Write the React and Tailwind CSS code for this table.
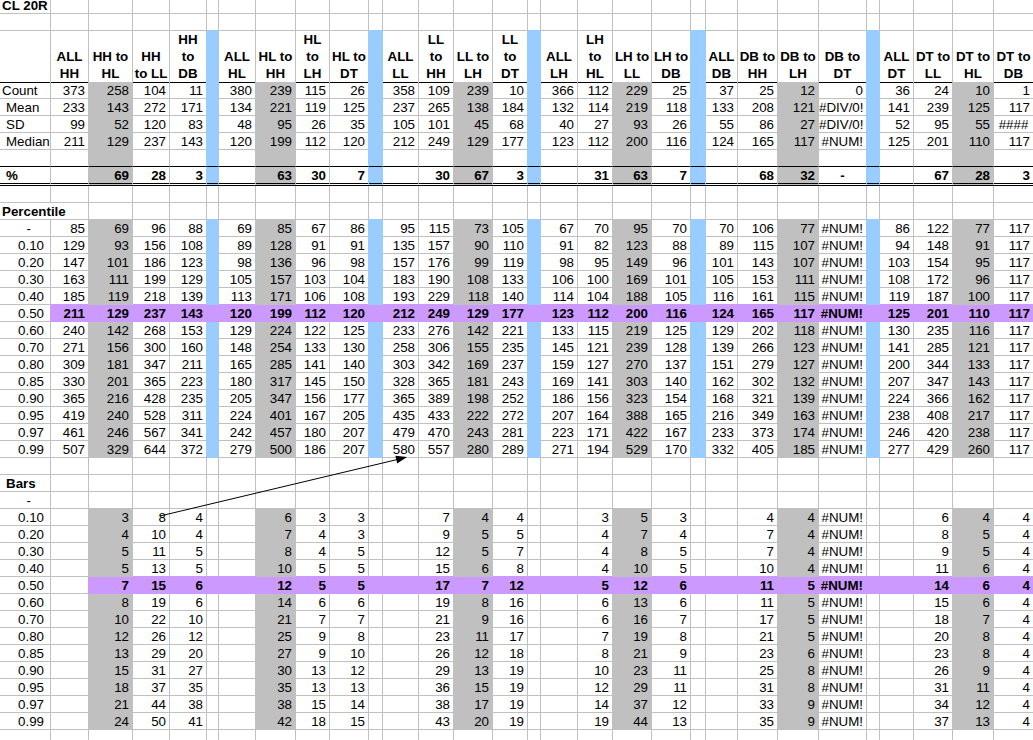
import React from "react";

// column template, widths read off the gridlines
const COLS =
  "grid grid-cols-[51px_38px_44px_37px_37px_12px_37px_40px_34px_39px_14px_36px_35px_39px_35px_13px_37px_35px_39px_39px_15px_32px_40px_41px_48px_13px_34px_39px_41px_40px]";

const NCOL = 30;
const BLUE = [5, 10, 15, 20, 25];
const GRAY = [2, 7, 13, 18, 23, 28];
const DC = [1, 2, 3, 4, 6, 7, 8, 9, 11, 12, 13, 14, 16, 17, 18, 19, 21, 22, 23, 24, 26, 27, 28, 29];

const HEAD = [
  ["ALL", "HH"], ["HH to", "HL"], ["HH", "to LL"], ["HH", "to", "DB"],
  ["ALL", "HL"], ["HL to", "HH"], ["HL", "to", "LH"], ["HL to", "DT"],
  ["ALL", "LL"], ["LL", "to", "HH"], ["LL to", "LH"], ["LL", "to", "DT"],
  ["ALL", "LH"], ["LH", "to", "HL"], ["LH to", "LL"], ["LH to", "DB"],
  ["ALL", "DB"], ["DB to", "HH"], ["DB to", "LH"], ["DB to", "DT"],
  ["ALL", "DT"], ["DT to", "LL"], ["DT to", "HL"], ["DT to", "DB"],
];

const STATS = [
  ["Count", "pl-[2px]", "373 258 104 11 380 239 115 26 358 109 239 10 366 112 229 25 37 25 12 0 36 24 10 1"],
  ["Mean", "pl-[6px]", "233 143 272 171 134 221 119 125 237 265 138 184 132 114 219 118 133 208 121 #DIV/0! 141 239 125 117"],
  ["SD", "pl-[6px]", "99 52 120 83 48 95 26 35 105 101 45 68 40 27 93 26 55 86 27 #DIV/0! 52 95 55 ####"],
  ["Median", "pl-[6px]", "211 129 237 143 120 199 112 120 212 249 129 177 123 112 200 116 124 165 117 #NUM! 125 201 110 117"],
];

const PCTL = [
  ["-", "85 69 96 88 69 85 67 86 95 115 73 105 67 70 95 70 70 106 77 #NUM! 86 122 77 117"],
  ["0.10", "129 93 156 108 89 128 91 91 135 157 90 110 91 82 123 88 89 115 107 #NUM! 94 148 91 117"],
  ["0.20", "147 101 186 123 98 136 96 98 157 176 99 119 98 95 149 96 101 143 107 #NUM! 103 154 95 117"],
  ["0.30", "163 111 199 129 105 157 103 104 183 190 108 133 106 100 169 101 105 153 111 #NUM! 108 172 96 117"],
  ["0.40", "185 119 218 139 113 171 106 108 193 229 118 140 114 104 188 105 116 161 115 #NUM! 119 187 100 117"],
  ["0.50", "211 129 237 143 120 199 112 120 212 249 129 177 123 112 200 116 124 165 117 #NUM! 125 201 110 117"],
  ["0.60", "240 142 268 153 129 224 122 125 233 276 142 221 133 115 219 125 129 202 118 #NUM! 130 235 116 117"],
  ["0.70", "271 156 300 160 148 254 133 130 258 306 155 235 145 121 239 128 139 266 123 #NUM! 141 285 121 117"],
  ["0.80", "309 181 347 211 165 285 141 140 303 342 169 237 159 127 270 137 151 279 127 #NUM! 200 344 133 117"],
  ["0.85", "330 201 365 223 180 317 145 150 328 365 181 243 169 141 303 140 162 302 132 #NUM! 207 347 143 117"],
  ["0.90", "365 216 428 235 205 347 156 177 365 389 198 252 186 156 323 154 168 321 139 #NUM! 224 366 162 117"],
  ["0.95", "419 240 528 311 224 401 167 205 435 433 222 272 207 164 388 165 216 349 163 #NUM! 238 408 217 117"],
  ["0.97", "461 246 567 341 242 457 180 207 479 470 243 281 223 171 422 167 233 373 174 #NUM! 246 420 238 117"],
  ["0.99", "507 329 644 372 279 500 186 207 580 557 280 289 271 194 529 170 332 405 185 #NUM! 277 429 260 117"],
];

const BARS = [
  ["0.10", ". 3 8 4 . 6 3 3 . 7 4 4 . 3 5 3 . 4 4 #NUM! . 6 4 4"],
  ["0.20", ". 4 10 4 . 7 4 3 . 9 5 5 . 4 7 4 . 7 4 #NUM! . 8 5 4"],
  ["0.30", ". 5 11 5 . 8 4 5 . 12 5 7 . 4 8 5 . 7 4 #NUM! . 9 5 4"],
  ["0.40", ". 5 13 5 . 10 5 5 . 15 6 8 . 4 10 5 . 10 4 #NUM! . 11 6 4"],
  ["0.50", ". 7 15 6 . 12 5 5 . 17 7 12 . 5 12 6 . 11 5 #NUM! . 14 6 4"],
  ["0.60", ". 8 19 6 . 14 6 6 . 19 8 16 . 6 13 6 . 11 5 #NUM! . 15 6 4"],
  ["0.70", ". 10 22 10 . 21 7 7 . 21 9 16 . 6 16 7 . 17 5 #NUM! . 18 7 4"],
  ["0.80", ". 12 26 12 . 25 9 8 . 23 11 17 . 7 19 8 . 21 5 #NUM! . 20 8 4"],
  ["0.85", ". 13 29 20 . 27 9 10 . 26 12 18 . 8 21 9 . 23 6 #NUM! . 23 8 4"],
  ["0.90", ". 15 31 27 . 30 13 12 . 29 13 19 . 10 23 11 . 25 8 #NUM! . 26 9 4"],
  ["0.95", ". 18 37 35 . 35 13 13 . 36 15 19 . 12 29 11 . 31 8 #NUM! . 31 11 4"],
  ["0.97", ". 21 44 38 . 38 15 14 . 38 17 19 . 14 37 12 . 33 9 #NUM! . 34 12 4"],
  ["0.99", ". 24 50 41 . 42 18 15 . 43 20 19 . 19 44 13 . 35 9 #NUM! . 37 13 4"],
];

const split = (s) => s.split(" ").map((v) => (v === "." ? "" : v));

const rows = [
  { h: "h-[14px]", kind: "title" },
  { h: "h-[17px]" },
  { h: "h-[51px]", kind: "head", fill: "head", bottom: "black" },
  ...STATS.map(([label, lcls, v]) => ({ h: "h-[17px]", label, lcls, vals: split(v), fill: "top" })),
  { h: "h-[17px]", fill: "top", bottom: "black" },
  { h: "h-[19px]", label: "%", lcls: "pl-[6px] font-bold", bold: true, fill: "top", bottom: "double",
    vals: split(". 69 28 3 . 63 30 7 . 30 67 3 . 31 63 7 . 68 32 - . 67 28 3") },
  { h: "h-[17px]" },
  { h: "h-[17px]", label: "Percentile", lcls: "pl-[2px] font-bold", span: true },
  ...PCTL.map(([label, v]) => ({
    h: "h-[17px]", label, lcls: label === "-" ? "text-right pr-[19px]" : "text-right pr-[6px]",
    vals: split(v), fill: label === "0.50" ? "pctMid" : "top", bold: label === "0.50",
  })),
  { h: "h-[17px]" },
  { h: "h-[17px]", label: "Bars", lcls: "pl-[6px] font-bold" },
  { h: "h-[17px]", label: "-", lcls: "text-right pr-[19px]" },
  ...BARS.map(([label, v]) => ({
    h: "h-[17px]", label, lcls: "text-right pr-[6px]",
    vals: split(v), fill: label === "0.50" ? "barsMid" : "bars", bold: label === "0.50",
  })),
  { h: "h-[17px]" },
];

function fillOf(row, c) {
  if (!row || c >= NCOL) return null;
  switch (row.fill) {
    case "head":
      return BLUE.includes(c) ? "blue" : null;
    case "top":
      if (BLUE.includes(c)) return "blue";
      return GRAY.includes(c) ? "gray" : null;
    case "pctMid":
      return c >= 1 ? "purple" : null;
    case "bars":
      return GRAY.includes(c) ? "gray" : null;
    case "barsMid":
      return c >= 2 ? "purple" : null;
    default:
      return null;
  }
}

const BG = { gray: "bg-[#c0c0c0]", blue: "bg-[#99ccff]", purple: "bg-[#cc99ff]" };
const BR = { grid: "border-r-[#c0c0c0]", gray: "border-r-[#c0c0c0]", blue: "border-r-[#99ccff]", purple: "border-r-[#cc99ff]" };
const BB = { grid: "border-b-[#c0c0c0]", gray: "border-b-[#c0c0c0]", blue: "border-b-[#99ccff]", purple: "border-b-[#cc99ff]" };

function Row({ row, next }) {
  const cells = [];
  for (let c = 0; c < NCOL; c++) {
    if (row.span && c === 1) continue;
    const f = fillOf(row, c);
    const right = row.span && c === 0 ? 2 : c + 1;
    const rc = f || fillOf(row, right) || "grid";
    let bb;
    if (row.bottom === "black") bb = "border-b border-b-black";
    else if (row.bottom === "double") bb = "border-b-[3px] border-double border-b-black";
    else bb = "border-b " + BB[f || fillOf(next, c) || "grid"];

    let content = null;
    let cls = "pt-[1px] leading-[15px]";
    if (row.kind === "title") {
      cls = "leading-[12px] pl-[2px] font-bold";
      if (c === 0) content = "CL 20R";
    } else if (row.kind === "head") {
      cls = "flex flex-col justify-end items-center leading-[17px] font-bold text-center";
      const i = DC.indexOf(c);
      if (i >= 0) content = HEAD[i].map((l) => <span key={l}>{l}</span>);
    } else if (c === 0) {
      cls += " " + (row.lcls || "");
      content = row.label || null;
    } else {
      const i = DC.indexOf(c);
      const v = i >= 0 && row.vals ? row.vals[i] : "";
      content = v;
      cls += v === "-" || v === "####" ? " text-center" : " text-right pr-[3px]";
      if (row.bold) cls += " font-bold";
    }

    cells.push(
      <div
        key={c}
        className={`${row.span && c === 0 ? "col-span-2" : ""} border-r ${BR[rc]} ${bb} ${f ? BG[f] : ""} whitespace-nowrap ${cls}`}
      >
        {content}
      </div>
    );
  }
  return <div className={`${COLS} ${row.h}`}>{cells}</div>;
}

export default function App() {
  return (
    <div className="relative w-[1033px] h-[740px] overflow-hidden bg-white text-black text-[13.33px] font-['Liberation_Sans',Arial,sans-serif]">
      <div className="w-[1034px]">
        {rows.map((row, r) => (
          <Row key={r} row={row} next={rows[r + 1]} />
        ))}
      </div>
      {/* drawn arrow shape from the sheet */}
      <svg className="absolute left-0 top-0 pointer-events-none" width="1033" height="740">
        <line x1="160" y1="516" x2="397" y2="459.6" stroke="black" strokeWidth="1" />
        <polygon points="407,457 397.2,463.5 395.4,455.7" fill="black" />
      </svg>
    </div>
  );
}
